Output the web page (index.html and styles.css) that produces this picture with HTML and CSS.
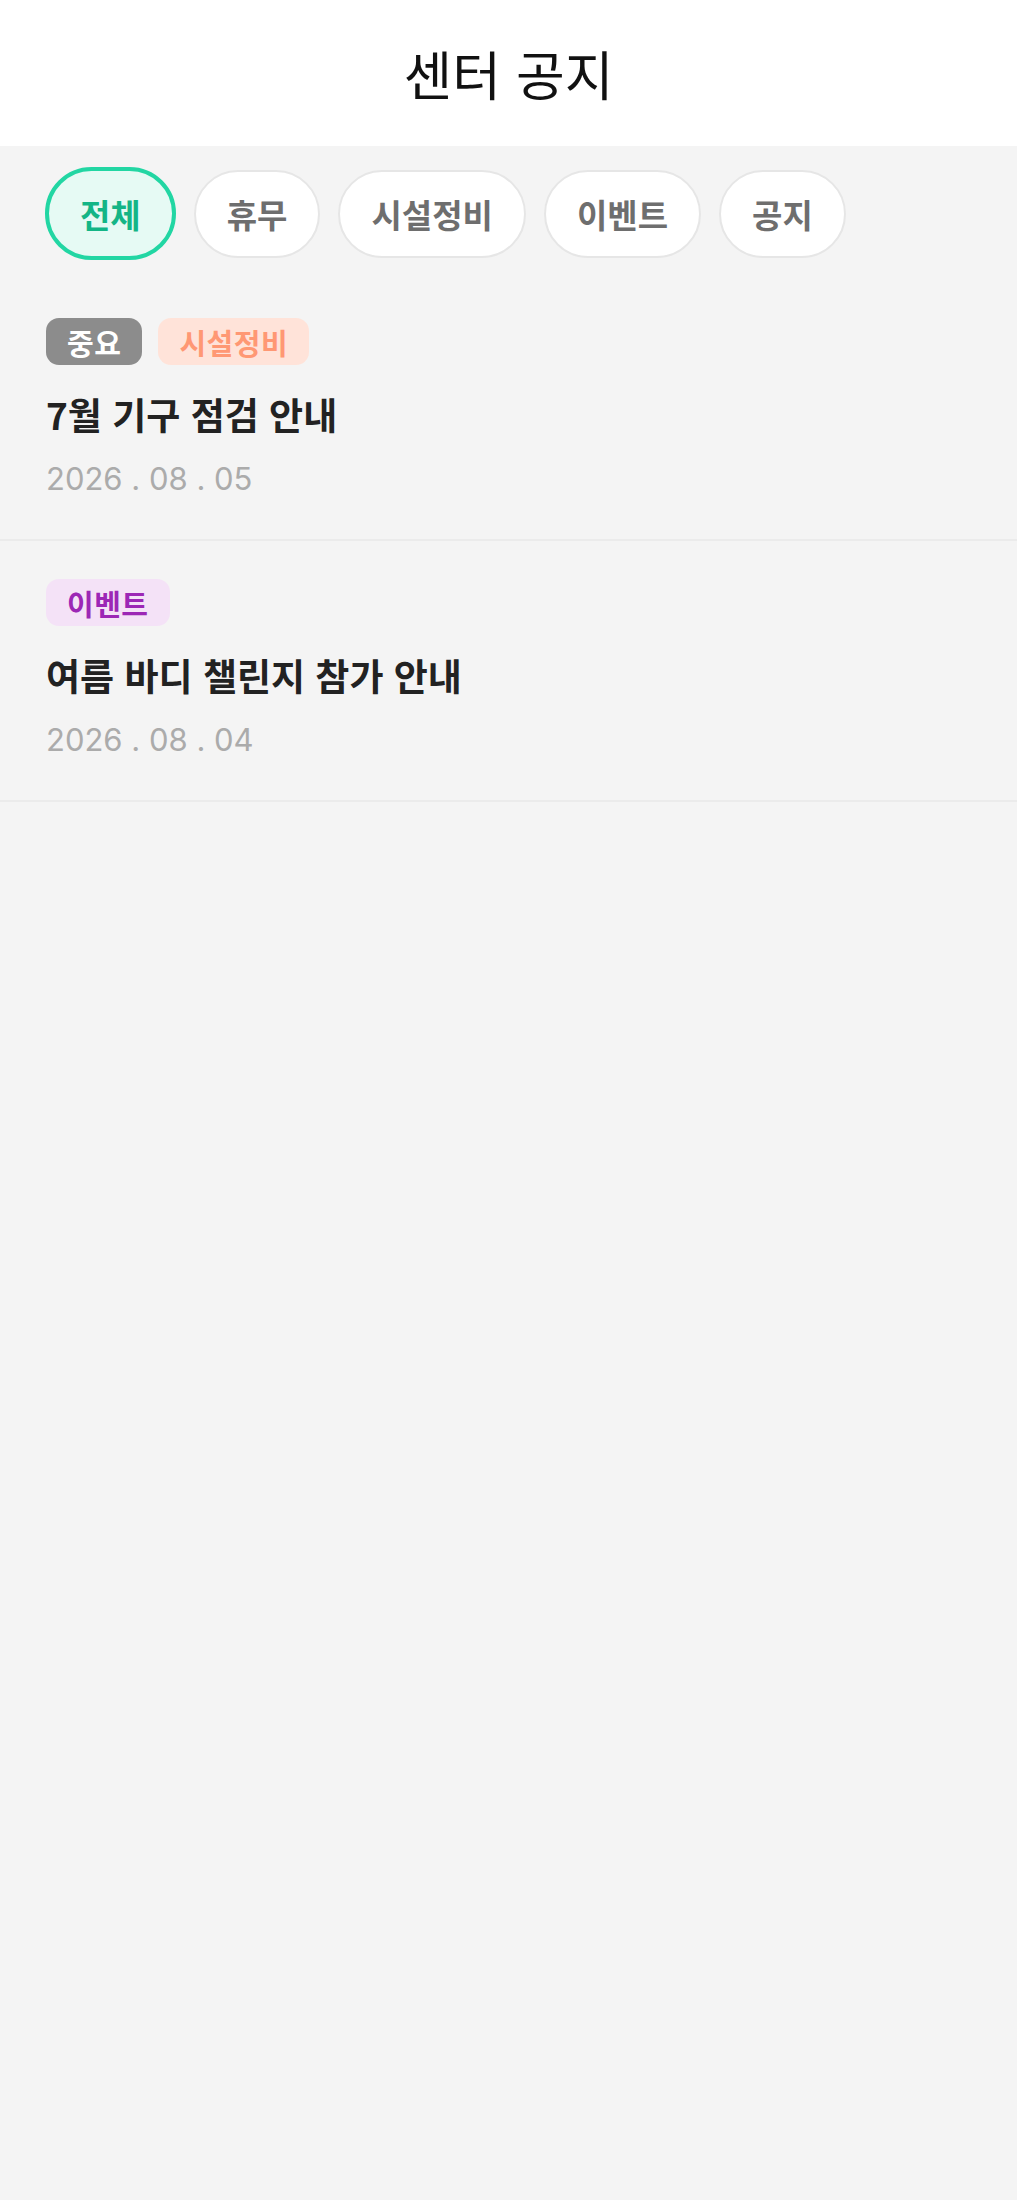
FILE: index.html
```html
<!DOCTYPE html>
<html lang="ko">
    <head>
        <meta charset="UTF-8">
        <title>센터 공지</title>
        <link rel="stylesheet" href="styles.css">
    </head>

    <body>
        <header class="top-bar">
            <h1 class="page-title">센터 공지</h1>
        </header>

        <nav class="filters">
            <button class="chip active">전체</button>
            <button class="chip">휴무</button>
            <button class="chip">시설정비</button>
            <button class="chip">이벤트</button>
            <button class="chip">공지</button>
        </nav>

        <ul class="notice-list">
            <li class="notice">
                <div class="tags">
                    <span class="tag important">중요</span>
                    <span class="tag facility">시설정비</span>
                </div>
                <p class="notice-title">7월 기구 점검 안내</p>
                <p class="notice-date">2026 . 08 . 05</p>
            </li>
            <li class="notice">
                <div class="tags">
                    <span class="tag event">이벤트</span>
                </div>
                <p class="notice-title">여름 바디 챌린지 참가 안내</p>
                <p class="notice-date">2026 . 08 . 04</p>
            </li>
        </ul>
    </body>
</html>
```

FILE: styles.css
```css
* {
    padding: 0;
    margin: 0;
    box-sizing: border-box;
}

body {
    background: #f4f4f4;
    font-family: "Noto Sans CJK KR", "Noto Sans", sans-serif;
    min-height: 100vh;
}

.top-bar {
    background: white;
    height: 146px;
    display: flex;
    align-items: center;
    justify-content: center;
}

.page-title {
    font-size: 53px;
    font-weight: 400;
    color: #111;
}

.filters {
    display: flex;
    align-items: center;
    gap: 18px;
    padding: 21px 46px 20px 45px;
}

.chip {
    font-family: inherit;
    height: 88px;
    padding: 0 31px;
    border-radius: 50px;
    border: 2px solid #e6e6e6;
    background: white;
    color: #6e6e6e;
    font-size: 33px;
    font-weight: 600;
}

.chip.active {
    height: 93px;
    padding: 0 31px;
    border: 4px solid #22d6a3;
    background: #e6faf4;
    color: #14b586;
    font-weight: 700;
}

.notice-list {
    list-style: none;
}

.notice {
    padding: 38px 46px;
    border-bottom: 2px solid #ebebeb;
}

.tags {
    display: flex;
    gap: 16px;
}

.tag {
    height: 47px;
    padding: 0 21px;
    border-radius: 13px;
    font-size: 29px;
    font-weight: 700;
    letter-spacing: 0.5px;
    display: flex;
    align-items: center;
}

.tag.important {
    background: #8c8c8c;
    color: white;
}

.tag.facility {
    background: #ffe3d9;
    color: #ff9874;
}

.tag.event {
    background: #f4e2f7;
    color: #9c27b5;
}

.notice-title {
    margin-top: 24px;
    font-size: 37px;
    line-height: 50px;
    font-weight: 700;
    color: #222;
}

.notice-date {
    margin-top: 17px;
    font-family: Inter, "Noto Sans CJK KR", sans-serif;
    font-size: 31px;
    line-height: 45px;
    color: #ababab;
}
```
